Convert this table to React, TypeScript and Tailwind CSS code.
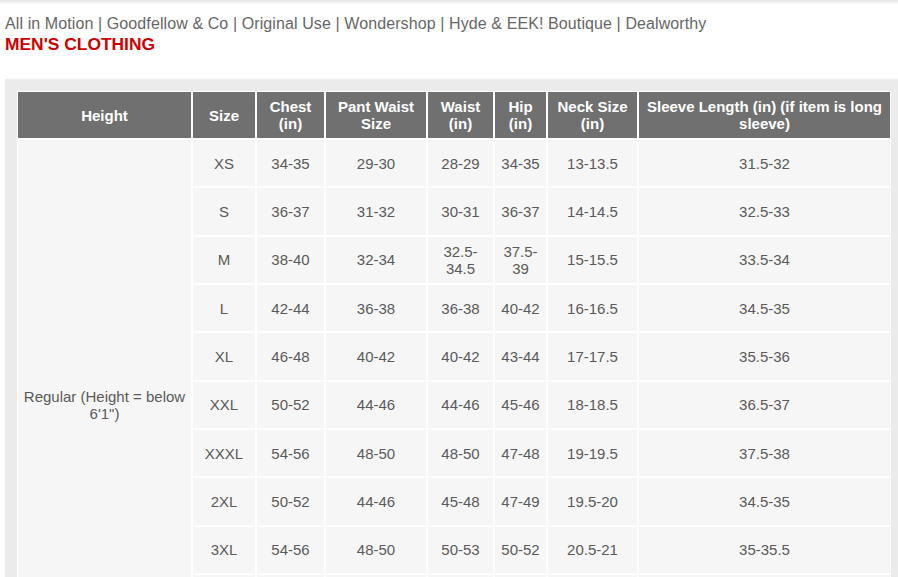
import React from "react";

const headers = [
  "Height",
  "Size",
  "Chest (in)",
  "Pant Waist Size",
  "Waist (in)",
  "Hip (in)",
  "Neck Size (in)",
  "Sleeve Length (in) (if item is long sleeve)",
];

const widths = [175, 64, 69, 102, 67, 53, 91, 253];

const rows: string[][] = [
  ["XS", "34-35", "29-30", "28-29", "34-35", "13-13.5", "31.5-32"],
  ["S", "36-37", "31-32", "30-31", "36-37", "14-14.5", "32.5-33"],
  ["M", "38-40", "32-34", "32.5-34.5", "37.5-39", "15-15.5", "33.5-34"],
  ["L", "42-44", "36-38", "36-38", "40-42", "16-16.5", "34.5-35"],
  ["XL", "46-48", "40-42", "40-42", "43-44", "17-17.5", "35.5-36"],
  ["XXL", "50-52", "44-46", "44-46", "45-46", "18-18.5", "36.5-37"],
  ["XXXL", "54-56", "48-50", "48-50", "47-48", "19-19.5", "37.5-38"],
  ["2XL", "50-52", "44-46", "45-48", "47-49", "19.5-20", "34.5-35"],
  ["3XL", "54-56", "48-50", "50-53", "50-52", "20.5-21", "35-35.5"],
  ["4XL", "58-60", "52-54", "54-57", "53-55", "21.5-22", "35.5-36"],
  ["5XL", "62-64", "56-58", "58-61", "56-58", "22.5-23", "36-36.5"],
];

export default function App() {
  return (
    <div
      className="w-[898px] overflow-hidden bg-white"
      style={{ fontFamily: '"Liberation Sans", Arial, sans-serif' }}
    >
      <div className="h-[5px] bg-gradient-to-b from-[#e6e6e6] to-white" />
      <div className="pl-[5px] pt-[9px]">
        <div className="text-[16px] leading-[20px] tracking-[0.1px] text-[#666666]">
          All in Motion | Goodfellow &amp; Co | Original Use | Wondershop | Hyde &amp; EEK! Boutique | Dealworthy
        </div>
        <div className="text-[17.4px] leading-[20px] font-bold text-[#cc0000]">
          MEN'S CLOTHING
        </div>
      </div>
      <div className="ml-[5px] mt-[25px] bg-[#ebebeb] pl-3 pt-3 pb-3">
        <table
          className="table-fixed border-separate border-spacing-0 bg-white text-[15px]"
          style={{ width: 874 }}
        >
          <colgroup>
            {widths.map((w, i) => (
              <col key={i} style={{ width: w }} />
            ))}
          </colgroup>
          <thead>
            <tr className="h-[48px]">
              {headers.map((h) => (
                <th
                  key={h}
                  className="border border-white bg-[#707070] px-[5px] py-0 text-center align-middle font-bold leading-[17px] text-white"
                >
                  {h}
                </th>
              ))}
            </tr>
          </thead>
          <tbody>
            {rows.map((r, ri) => (
              <tr key={ri} className="h-[48.33px]">
                {ri === 0 && (
                  <td
                    rowSpan={rows.length}
                    className="border border-white bg-[#f6f6f6] px-[5px] text-center align-middle leading-[17px] text-[#5a5a5a]"
                  >
                    Regular (Height = below 6'1")
                  </td>
                )}
                {r.map((c, ci) => (
                  <td
                    key={ci}
                    className="border border-white bg-[#f6f6f6] px-[5px] py-0 text-center align-middle leading-[17px] text-[#5a5a5a]"
                  >
                    {c}
                  </td>
                ))}
              </tr>
            ))}
          </tbody>
        </table>
      </div>
    </div>
  );
}
